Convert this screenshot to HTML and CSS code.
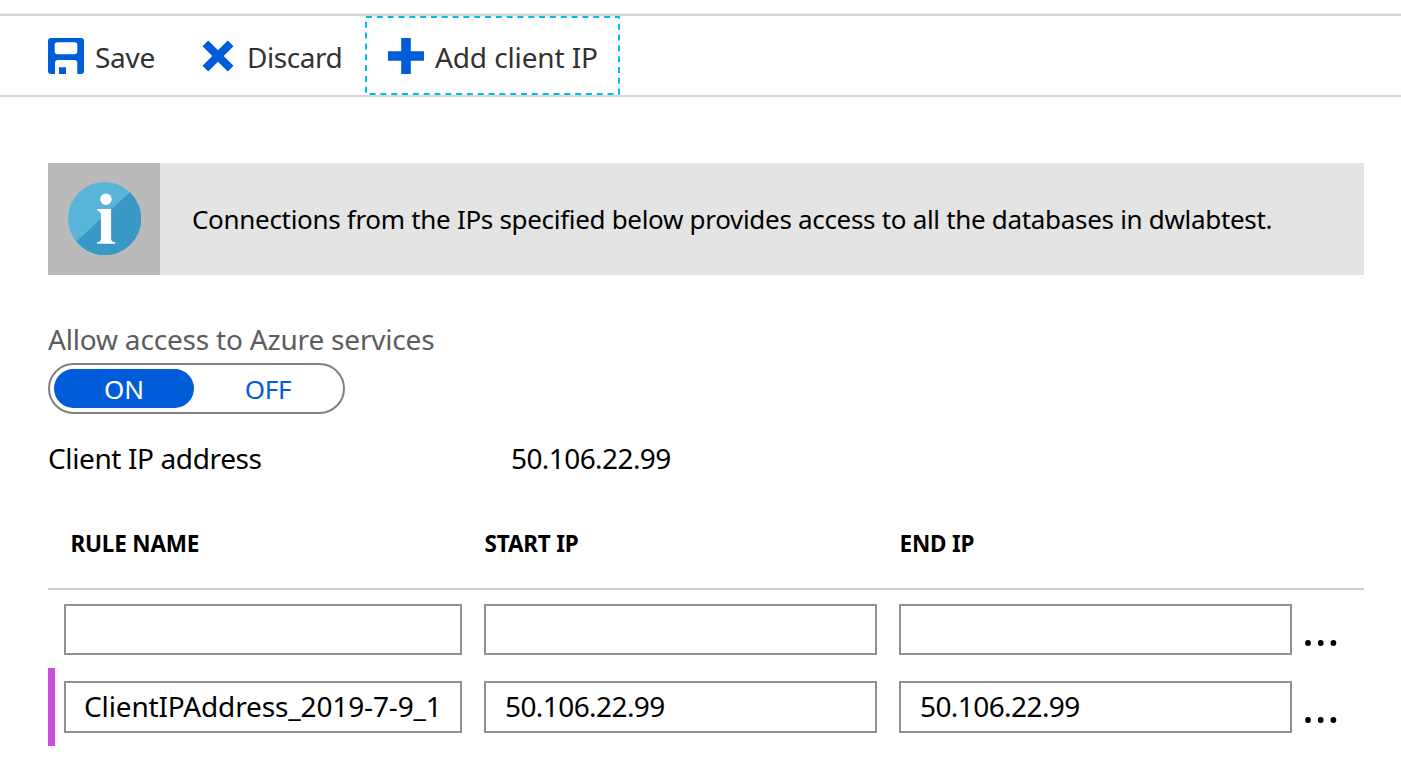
FILE: index.html
```html
<!DOCTYPE html>
<html lang="en">
<head>
<meta charset="utf-8">
<title>Firewall settings</title>
<link rel="stylesheet" href="styles.css">
</head>
<body>
<div class="toolbar">
  <button class="command save">
    <svg width="36" height="36" viewBox="0 0 36 36"><path fill="#015cda" fill-rule="evenodd" d="M3 0H33Q36 0 36 3V33Q36 36 33 36H29.300V25Q29.300 22 26.300 22H10Q7 22 7 25V36H3Q0 36 0 33V3Q0 0 3 0ZM9.500 4.200Q6.700 4.200 6.700 7V13.500Q6.700 16.300 9.500 16.300H26.500Q29.300 16.300 29.300 13.500V7Q29.300 4.200 26.500 4.200ZM11 29.300H18V36H11Z"/></svg>
    <span class="label-save">Save</span>
  </button>
  <button class="command discard">
    <svg width="32" height="32" viewBox="0 0 32 32"><path fill="#015cda" d="M6.200 .5 16 10.300 25.800 .5 31.500 6.200 21.700 16 31.500 25.800 25.800 31.500 16 21.700 6.200 31.500 .5 25.800 10.300 16 .5 6.200Z"/></svg>
    <span class="label-discard">Discard</span>
  </button>
  <button class="command add">
    <svg width="36" height="36" viewBox="0 0 36 36"><path fill="#015cda" d="M13.200 0H22.800V13.200H36V22.800H22.800V36H13.200V22.800H0V13.200H13.200Z"/></svg>
    <span class="label-add">Add client IP</span>
    <svg class="focus" width="255" height="79"><rect x="1" y="1" width="253" height="77" fill="none" stroke="#00bcf2" stroke-width="2" stroke-dasharray="6 4.820"/></svg>
  </button>
</div>
<main class="content">
  <section class="notice">
    <div class="notice-icon">
      <svg width="73" height="73" viewBox="0 0 72 72"><circle cx="36" cy="36" r="36" fill="#59b4d9"/><path fill="#3999c6" d="M61 10.100A36 36 0 1 1 8.200 58.800Z"/><circle cx="37.400" cy="17" r="5.700" fill="#fff"/><path fill="#fff" d="M28.700 26.600H42.500V56Q42.500 59 46.500 59.500V61H28.700V59.500Q32.500 59 32.500 56V32.500Q32.500 28.500 28.700 28Z"/></svg>
    </div>
    <p class="notice-text">Connections from the IPs specified below provides access to all the databases in dwlabtest.</p>
  </section>
  <div class="access-label">Allow access to Azure services</div>
  <div class="toggle"><span class="on">ON</span><span class="off">OFF</span></div>
  <div class="client-row"><span class="client-label">Client IP address</span><span class="ip">50.106.22.99</span></div>
  <div class="rules">
    <div class="head"><span class="h-rule">RULE NAME</span><span class="h-start">START IP</span><span class="h-end">END IP</span></div>
    <div class="row">
      <div class="field"></div><div class="field"></div><div class="field"></div>
      <svg class="more" width="32" height="6"><circle cx="3" cy="3" r="2.900"/><circle cx="15.700" cy="3" r="2.900"/><circle cx="28.400" cy="3" r="2.900"/></svg>
    </div>
    <div class="row added">
      <div class="field"><span class="value name">ClientIPAddress_2019-7-9_1</span></div><div class="field"><span class="value ip">50.106.22.99</span></div><div class="field"><span class="value ip">50.106.22.99</span></div>
      <svg class="more" width="32" height="6"><circle cx="3" cy="3" r="2.900"/><circle cx="15.700" cy="3" r="2.900"/><circle cx="28.400" cy="3" r="2.900"/></svg>
    </div>
  </div>
</main>
</body>
</html>
```
FILE: styles.css
```css
* { box-sizing: border-box; }
body { margin: 0; background: #fff; color: #000; font: 28px/38px "Noto Sans", sans-serif; overflow: hidden; }
svg { display: block; flex: none; }
.toolbar { display: flex; margin-top: 14px; height: 83px; border-top: 2px solid #d6d6d6; border-bottom: 2px solid #d6d6d6; box-shadow: 0 -1px #f3f3f3; padding-left: 48px; }
.command { position: relative; display: flex; align-items: center; border: 0; background: none; padding: 0; font: inherit; color: #323232; white-space: nowrap; }
.save { width: 154px; gap: 11px; }
.discard { width: 163px; gap: 13px; }
.add { width: 255px; padding-left: 23px; gap: 11px; }
.command span { padding-top: 2px; }
.label-save { letter-spacing: -.3px; }
.label-discard { letter-spacing: -.45px; }
.label-add { letter-spacing: -.12px; }
.focus { position: absolute; left: 0; top: 0; }
.content { padding: 66px 37px 0 48px; }
.notice { display: flex; height: 112px; background: #e4e4e4; }
.notice-icon { width: 112px; padding: 19px 20px; background: #bababa; }
.notice-text { margin: 0; padding: 37px 0 0 32px; font-size: 26px; letter-spacing: -.31px; white-space: nowrap; }
.access-label { margin-top: 45px; color: #5d5d5d; letter-spacing: -.19px; white-space: nowrap; }
.toggle { display: flex; align-items: center; width: 297px; height: 51px; margin-top: 5px; padding: 0 4px; border: 2px solid #808080; border-radius: 26px; font-size: 26px; line-height: 40px; text-align: center; }
.on { flex: none; width: 140px; height: 39px; border-radius: 20px; background: #015cda; color: #fff; }
.off { flex: none; width: 148px; height: 39px; color: #015cda; letter-spacing: -.3px; }
.client-row { display: flex; margin-top: 25px; white-space: nowrap; }
.client-label { width: 463px; letter-spacing: -.38px; }
.ip { letter-spacing: -.58px; }
.head { display: grid; grid-template-columns: 414px 415px 1fr; height: 113px; padding: 48px 0 0 22.500px; border-bottom: 2px solid #ccc; font-size: 22.500px; font-weight: 700; letter-spacing: -.2px; white-space: nowrap; }
.row { display: grid; grid-template-columns: 398px 393px 393px 32px; column-gap: 22px; height: 78px; padding: 14px 0 0 16px; }
.row .more { margin: 36px 0 0 -9px; }
.field { height: 51px; border: 2px solid #919191; padding: 0 18px 0 19px; }
.value { display: block; line-height: 47px; white-space: nowrap; }
.name { margin-left: -1px; letter-spacing: -.14px; }
.added { border-left: 7px solid #c74fd9; padding: 13px 0 0 9px; }
.added .field { height: 52px; }
```
